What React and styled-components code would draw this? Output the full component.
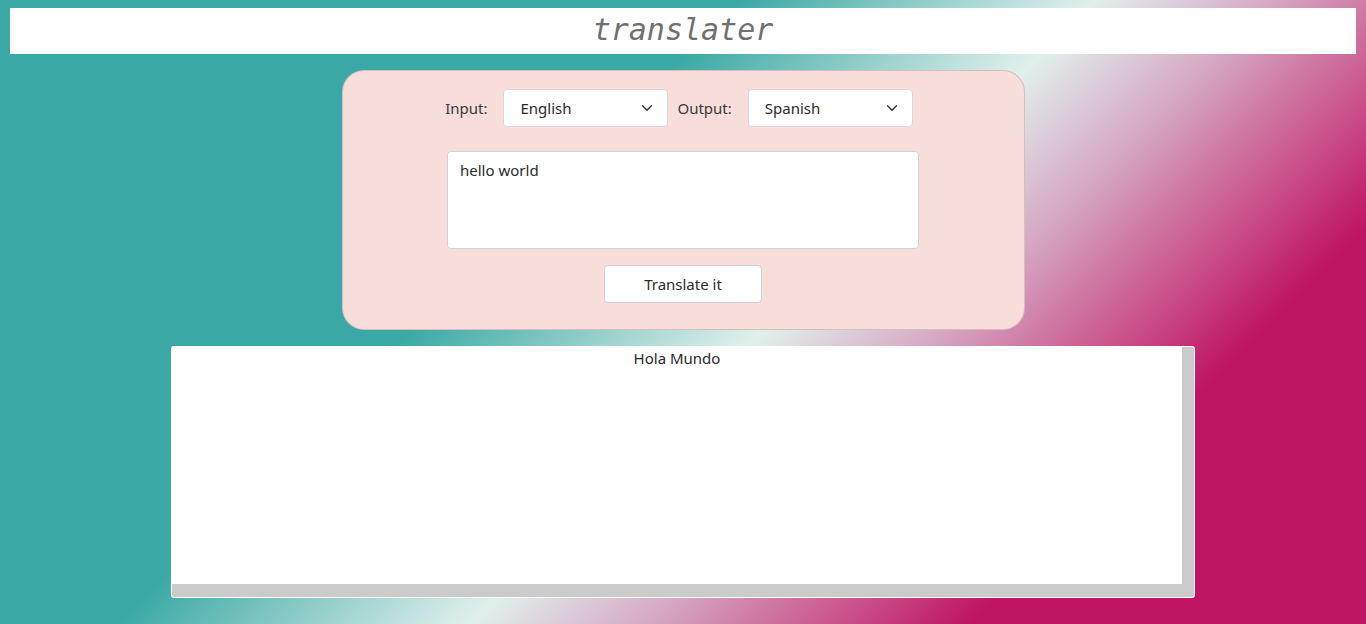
import React, { useState } from 'react'
import styled, { createGlobalStyle } from 'styled-components'
import { ChevronDown } from 'lucide-react'

const GlobalStyle = createGlobalStyle`
    * { box-sizing: border-box; }
    html, body {
        margin: 0;
        min-height: 100vh;
    }
    body {
        font-family: "Noto Sans", "Open Sans", sans-serif;
        color: #212529;
        background: linear-gradient(135deg, #3aa8a4 37%, #e1f0ec 55%, #d6a7c3 64%, #c01563 80%);
        background-attachment: fixed;
    }
`;

const languages = ['English', 'Spanish'];

export default function App() {
    const [input, setInput] = useState('English');
    const [output, setOutput] = useState('Spanish');
    const [text, setText] = useState('hello world');

    return (
        <React.Fragment>
            <GlobalStyle />
            <Page>
                <Header>
                    <Title>translater</Title>
                </Header>
                <Panel>
                    <SelectRow>
                        <Label>Input:</Label>
                        <LangSelect value={input} onChange={setInput} />
                        <Label>Output:</Label>
                        <LangSelect value={output} onChange={setOutput} />
                    </SelectRow>
                    <SourceText value={text} onChange={(e) => setText(e.target.value)} />
                    <TranslateButton type="button">Translate it</TranslateButton>
                </Panel>
                <ResultBox>
                    <ResultText>Hola Mundo</ResultText>
                    <ScrollTrack $vertical />
                    <ScrollTrack />
                </ResultBox>
            </Page>
        </React.Fragment>
    )
}

const LangSelect = ({ value, onChange }) => {
    return (
        <SelectBox onClick={() => onChange(languages[(languages.indexOf(value) + 1) % languages.length])}>
            <span>{ value }</span>
            <ChevronDown size={18} strokeWidth={1.8} />
        </SelectBox>
    )
}

// styled components
const Page = styled.div`
    display: flex;
    flex-flow: column nowrap;
    align-items: center;
    padding: 8px 10px 26px;
`;

const Header = styled.header`
    display: flex;
    justify-content: center;
    align-items: center;
    width: 100%;
    height: 46px;
    background-color: #ffffff;
`;

const Title = styled.h1`
    margin: -3px 0px 0px;
    font-family: "DejaVu Sans Mono", "Liberation Mono", monospace;
    font-size: 30px;
    font-style: italic;
    font-weight: 300;
    color: #707070;
`;

const Panel = styled.section`
    display: flex;
    flex-flow: column nowrap;
    align-items: center;
    width: 683px;
    margin: 16px 0px 16px;
    padding: 18px 0px 26px;
    border: 1px solid rgba(0, 0, 0, 0.14);
    border-radius: 22px;
    background-color: #f8dedb;
`;

const SelectRow = styled.div`
    display: flex;
    flex-flow: row nowrap;
    justify-content: center;
    align-items: center;
    margin: 0px 0px 24px -8px;
`;

const Label = styled.label`
    margin: 0px 16px 0px 0px;
    font-size: 15px;
    color: #3a3a3a;
`;

const SelectBox = styled.div`
    display: flex;
    justify-content: space-between;
    align-items: center;
    width: 165px;
    height: 38px;
    margin: 0px 9px 0px 0px;
    padding: 0px 11px 0px 16px;
    border: 1px solid #d8d8dc;
    border-radius: 4px;
    background-color: #ffffff;
    font-size: 15px;
    color: #2a2a2a;
    cursor: pointer;

    &:last-child {
        margin-right: 0px;
    }
    & svg {
        color: #333333;
    }
`;

const SourceText = styled.textarea`
    display: block;
    width: 472px;
    height: 98px;
    margin: 0px 0px 16px;
    padding: 7px 12px;
    border: 1px solid #d0d0d6;
    border-radius: 4px;
    background-color: #ffffff;
    font-family: inherit;
    font-size: 15px;
    line-height: 1.5;
    color: #2a2a2a;
    resize: none;
    outline: none;
`;

const TranslateButton = styled.button`
    width: 158px;
    height: 38px;
    border: 1px solid #d0d0d6;
    border-radius: 4px;
    background-color: #ffffff;
    font-family: inherit;
    font-size: 15px;
    color: #2a2a2a;
    cursor: pointer;
`;

const ResultBox = styled.div`
    display: grid;
    grid-template-columns: 1fr 12px;
    grid-template-rows: 1fr 13px;
    width: 1024px;
    height: 252px;
    overflow: hidden;
    border: 1px solid rgba(255, 255, 255, 0.7);
    border-radius: 3px;
    background-color: #ffffff;
`;

const ResultText = styled.div`
    padding: 0px;
    font-size: 15px;
    line-height: 1.5;
    text-align: center;
    color: #2a2a2a;
`;

const ScrollTrack = styled.div`
    grid-column: ${({ $vertical }) => ($vertical ? '2' : '1 / 3')};
    grid-row: ${({ $vertical }) => ($vertical ? '1' : '2')};
    background-color: #cbcbcb;
`;
